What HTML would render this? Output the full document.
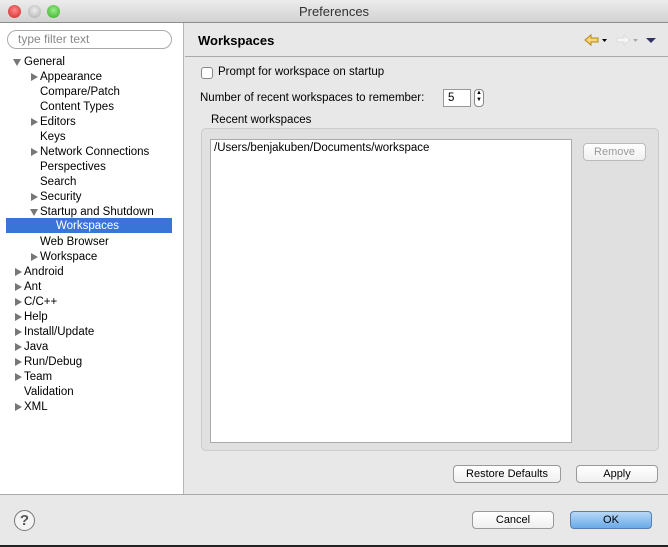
<!DOCTYPE html><html><head><style>
*{margin:0;padding:0;box-sizing:border-box}
body{width:668px;height:547px;position:relative;overflow:hidden;font-family:"Liberation Sans",sans-serif;font-size:11px;color:#000;background:#e8e8e8}
.a{position:absolute}
.title{left:0;top:0;width:668px;height:23px;background:linear-gradient(#ececec,#d2d2d2);border-bottom:1px solid #8c8c8c;text-align:center;font-size:13px;line-height:23px;color:#333}
.dot{top:5px;width:13px;height:13px;border-radius:50%}
.left{left:0;top:23px;width:184px;height:471px;background:#fff;border-right:1px solid #b5b5b5}
.filter{left:7px;top:30px;width:165px;height:19px;border:1px solid #aaa;border-radius:10px;color:#888;font-size:12px;padding-left:10px;line-height:17px;background:#fff}
.t{position:absolute;font-size:11.5px;line-height:15px;white-space:nowrap;margin-top:1px}
.tri{position:absolute;width:0;height:0;margin-top:1px}
.r{border-top:4px solid transparent;border-bottom:4px solid transparent;border-left:7px solid #777}
.d{border-left:4px solid transparent;border-right:4px solid transparent;border-top:7px solid #777}
.btn{position:absolute;height:18px;border:1px solid #999;border-radius:4px;background:linear-gradient(#fff,#f0f0f0);text-align:center;font-size:11px;line-height:16px;white-space:nowrap}
</style></head><body>
<div class="a title">Preferences</div>
<div class="a dot" style="left:8px;background:radial-gradient(circle at 50% 40%,#f88,#c22)"></div>
<div class="a dot" style="left:28px;background:radial-gradient(circle at 50% 40%,#eee,#aaa)"></div>
<div class="a dot" style="left:47px;background:radial-gradient(circle at 50% 40%,#9e8,#3a2)"></div>
<div class="a left"></div>
<div class="a filter">type filter text</div>
<div class="a" style="left:6px;top:218px;width:166px;height:15px;background:#3875d7"></div>
<div class="tri d" style="left:13px;top:58px"></div><div class="t" style="left:24px;top:54px">General</div>
<div class="tri r" style="left:31px;top:72px"></div><div class="t" style="left:40px;top:69px">Appearance</div>
<div class="t" style="left:40px;top:84px">Compare/Patch</div>
<div class="t" style="left:40px;top:99px">Content Types</div>
<div class="tri r" style="left:31px;top:117px"></div><div class="t" style="left:40px;top:114px">Editors</div>
<div class="t" style="left:40px;top:129px">Keys</div>
<div class="tri r" style="left:31px;top:147px"></div><div class="t" style="left:40px;top:144px">Network Connections</div>
<div class="t" style="left:40px;top:159px">Perspectives</div>
<div class="t" style="left:40px;top:174px">Search</div>
<div class="tri r" style="left:31px;top:192px"></div><div class="t" style="left:40px;top:189px">Security</div>
<div class="tri d" style="left:30px;top:208px"></div><div class="t" style="left:40px;top:204px">Startup and Shutdown</div>
<div class="t" style="left:56px;top:218px;color:#fff">Workspaces</div>
<div class="t" style="left:40px;top:234px">Web Browser</div>
<div class="tri r" style="left:31px;top:252px"></div><div class="t" style="left:40px;top:249px">Workspace</div>
<div class="tri r" style="left:15px;top:267px"></div><div class="t" style="left:24px;top:264px">Android</div>
<div class="tri r" style="left:15px;top:282px"></div><div class="t" style="left:24px;top:279px">Ant</div>
<div class="tri r" style="left:15px;top:297px"></div><div class="t" style="left:24px;top:294px">C/C++</div>
<div class="tri r" style="left:15px;top:312px"></div><div class="t" style="left:24px;top:309px">Help</div>
<div class="tri r" style="left:15px;top:327px"></div><div class="t" style="left:24px;top:324px">Install/Update</div>
<div class="tri r" style="left:15px;top:342px"></div><div class="t" style="left:24px;top:339px">Java</div>
<div class="tri r" style="left:15px;top:357px"></div><div class="t" style="left:24px;top:354px">Run/Debug</div>
<div class="tri r" style="left:15px;top:372px"></div><div class="t" style="left:24px;top:369px">Team</div>
<div class="t" style="left:24px;top:384px">Validation</div>
<div class="tri r" style="left:15px;top:402px"></div><div class="t" style="left:24px;top:399px">XML</div>

<div class="a" style="left:198px;top:33px;font-size:13px;font-weight:bold">Workspaces</div>
<div class="a" style="left:185px;top:56px;width:483px;height:1px;background:#aaa"></div>
<svg class="a" style="left:584px;top:33px" width="80" height="14"><path d="M1 7 L7 2 V5 H14 V9 H7 V12 Z" fill="#f6d77a" stroke="#b8860b"/><path d="M18 6h5l-2.5 3z" fill="#000"/><path d="M46 7 L40 2 V5 H33 V9 H40 V12 Z" fill="#f4f4f4" stroke="#ddd"/><path d="M49 6h5l-2.5 3z" fill="#aaa"/><path d="M62 5h10l-5 5z" fill="#336"/></svg>
<div class="a" style="left:201px;top:67px;width:12px;height:12px;border:1px solid #888;border-radius:3px;background:#fff"></div>
<div class="a" style="left:218px;top:66px;font-size:11.5px">Prompt for workspace on startup</div>
<div class="a" style="left:200px;top:92px;font-size:11.5px">Number of recent workspaces to remember:</div>
<div class="a" style="left:443px;top:89px;width:28px;height:18px;border:1px solid #999;background:#fff;font-size:11.5px;padding-left:4px;line-height:17px">5</div>
<div class="a" style="left:474px;top:89px;width:10px;height:18px;border:1px solid #888;border-radius:4px;background:#fff;font-size:6px;text-align:center;line-height:7px">▲<br>▼</div>
<div class="a" style="left:211px;top:114px;font-size:11.5px">Recent workspaces</div>
<div class="a" style="left:201px;top:128px;width:458px;height:323px;border:1px solid #ccc;border-radius:5px;background:#e0e0e0"></div>
<div class="a" style="left:210px;top:139px;width:362px;height:304px;border:1px solid #aaa;background:#fff;font-size:11.5px;padding:2px 3px">/Users/benjakuben/Documents/workspace</div>
<div class="btn" style="left:583px;top:143px;width:63px;color:#999;border-color:#bbb">Remove</div>
<div class="btn" style="left:453px;top:465px;width:108px">Restore Defaults</div>
<div class="btn" style="left:576px;top:465px;width:82px">Apply</div>
<div class="a" style="left:0;top:494px;width:668px;height:1px;background:#aaa"></div>
<div class="a" style="left:14px;top:510px;width:21px;height:21px;border:1px solid #777;border-radius:50%;text-align:center;font-size:15px;font-weight:bold;line-height:19px;color:#555;background:#f4f4f4">?</div>
<div class="btn" style="left:472px;top:511px;width:82px">Cancel</div>
<div class="btn" style="left:570px;top:511px;width:82px;background:linear-gradient(#b8d8f8,#6aaae8);border-color:#5580b0">OK</div>
<div class="a" style="left:0;top:545px;width:668px;height:2px;background:#222"></div>
</body></html>
